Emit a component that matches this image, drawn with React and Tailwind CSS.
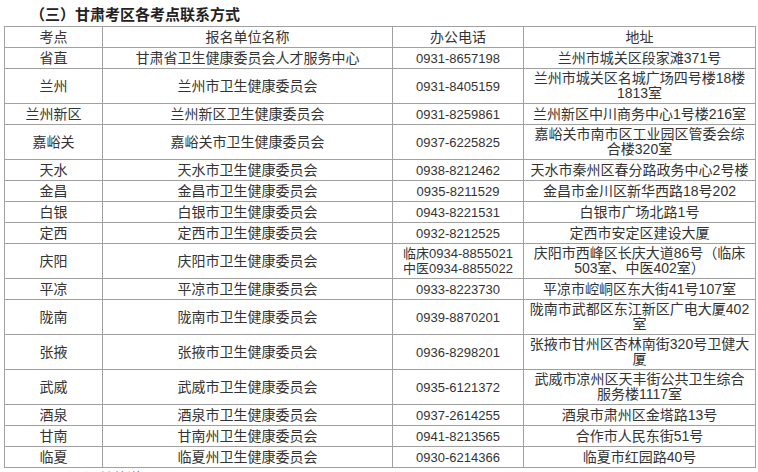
import React from "react";

const rows = [
  ["省直", "甘肃省卫生健康委员会人才服务中心", ["0931-8657198"], ["兰州市城关区段家滩371号"]],
  ["兰州", "兰州市卫生健康委员会", ["0931-8405159"], ["兰州市城关区名城广场四号楼18楼", "1813室"]],
  ["兰州新区", "兰州新区卫生健康委员会", ["0931-8259861"], ["兰州新区中川商务中心1号楼216室"]],
  ["嘉峪关", "嘉峪关市卫生健康委员会", ["0937-6225825"], ["嘉峪关市南市区工业园区管委会综", "合楼320室"]],
  ["天水", "天水市卫生健康委员会", ["0938-8212462"], ["天水市秦州区春分路政务中心2号楼"]],
  ["金昌", "金昌市卫生健康委员会", ["0935-8211529"], ["金昌市金川区新华西路18号202"]],
  ["白银", "白银市卫生健康委员会", ["0943-8221531"], ["白银市广场北路1号"]],
  ["定西", "定西市卫生健康委员会", ["0932-8212525"], ["定西市安定区建设大厦"]],
  ["庆阳", "庆阳市卫生健康委员会", ["临床0934-8855021", "中医0934-8855022"], ["庆阳市西峰区长庆大道86号（临床", "503室、中医402室）"]],
  ["平凉", "平凉市卫生健康委员会", ["0933-8223730"], ["平凉市崆峒区东大街41号107室"]],
  ["陇南", "陇南市卫生健康委员会", ["0939-8870201"], ["陇南市武都区东江新区广电大厦402", "室"]],
  ["张掖", "张掖市卫生健康委员会", ["0936-8298201"], ["张掖市甘州区杏林南街320号卫健大", "厦"]],
  ["武威", "武威市卫生健康委员会", ["0935-6121372"], ["武威市凉州区天丰街公共卫生综合", "服务楼1117室"]],
  ["酒泉", "酒泉市卫生健康委员会", ["0937-2614255"], ["酒泉市肃州区金塔路13号"]],
  ["甘南", "甘南州卫生健康委员会", ["0941-8213565"], ["合作市人民东街51号"]],
  ["临夏", "临夏州卫生健康委员会", ["0930-6214366"], ["临夏市红园路40号"]],
];

const cell = "border border-[#a0a0a0] text-center align-middle whitespace-nowrap p-0";

// tall: the row holds a two-line cell (35px between rules), else 21px
const Lines = ({ items, tall }) => (
  <div className={(tall ? "h-[34px]" : "h-[20px]") + " flex flex-col justify-center items-center"}>
    {items.map((t, i) => (
      <div key={i} className="h-[15px] leading-[15px]">{t}</div>
    ))}
  </div>
);

const App = () => {
  return (
    <div
      className="w-[758px] h-[472px] overflow-hidden bg-white text-[#333] text-[14px]"
      style={{ fontFamily: '"Liberation Sans", "Noto Sans CJK SC", sans-serif' }}
    >
      <div className="h-[26px] pl-[30px] pt-[5px] text-[15px] leading-[20px] font-bold text-[#222]">
        （三）甘肃考区各考点联系方式
      </div>
      <table className="ml-[4px] w-[751px] table-fixed border-collapse">
        <colgroup>
          <col className="w-[98px]" />
          <col className="w-[290px]" />
          <col className="w-[131px]" />
          <col className="w-[232px]" />
        </colgroup>
        <tbody>
          <tr>
            <td className={cell}><Lines items={["考点"]} /></td>
            <td className={cell}><Lines items={["报名单位名称"]} /></td>
            <td className={cell}><Lines items={["办公电话"]} /></td>
            <td className={cell}><Lines items={["地址"]} /></td>
          </tr>
          {rows.map((r, i) => {
            const tall = r[2].length > 1 || r[3].length > 1;
            return (
              <tr key={i}>
                <td className={cell}><Lines items={[r[0]]} tall={tall} /></td>
                <td className={cell}><Lines items={[r[1]]} tall={tall} /></td>
                <td className={cell + " text-[13px]"}>
                  <Lines items={r[2]} tall={tall} />
                </td>
                <td className={cell}>
                  <Lines items={r[3]} tall={tall} />
                </td>
              </tr>
            );
          })}
        </tbody>
      </table>
      <div className="pl-[57px] pt-[2px] text-[14px] leading-[16px] text-[#1a5fb4]">
        （四）其他说明
      </div>
    </div>
  );
};

export default App;
